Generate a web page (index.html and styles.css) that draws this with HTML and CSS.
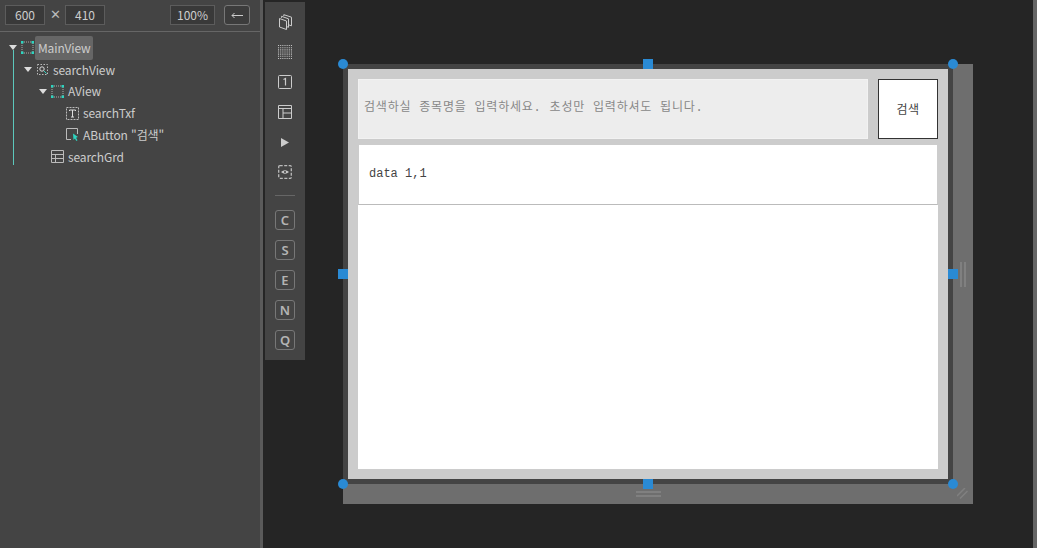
FILE: index.html
```html
<!DOCTYPE html>
<html lang="ko">
<head>
  <meta charset="UTF-8">
  <title>MainView</title>
  <link rel="stylesheet" href="styles.css">
</head>
<body>
  <div class="panel">
    <div class="sizebar">
      <span class="numbox w40">600</span>
      <span class="times">&#x2715;</span>
      <span class="numbox w40">410</span>
      <span class="numbox w45 zoom">100%</span>
      <button class="backbtn"><svg class="back-icon" viewBox="0 0 12 7"><path d="M12 3.500H1M3.500 1L1 3.500 3.500 6" fill="none" stroke="#ccc"/></svg></button>
    </div>

    <div class="tree">
      <div class="tree-line"></div>

      <div class="row lvl0">
        <span class="arrow"></span>
        <svg class="icon" viewBox="0 0 13 13"><rect x="1" y="1" width="11" height="11" fill="none" stroke="#aaa" stroke-dasharray="1 1"/><path d="M0 0h2.500v2.500H0zM10.500 0h2.500v2.500h-2.500zM0 10.500h2.500v2.500H0zM10.500 10.500h2.500v2.500h-2.500z" fill="#2dd4bf"/></svg>
        <span class="label active">MainView</span>
      </div>

      <div class="row lvl1">
        <span class="arrow"></span>
        <svg class="icon" viewBox="0 0 13 13"><rect x="1.500" y="1.500" width="10" height="10" fill="none" stroke="#bbb" stroke-dasharray="1.500 1.500"/><circle cx="6" cy="6" r="2.200" fill="none" stroke="#ddd"/><path d="M8 8l2.500 2.500" stroke="#2dd4bf"/></svg>
        <span class="label">searchView</span>
      </div>

      <div class="row lvl2">
        <span class="arrow"></span>
        <svg class="icon" viewBox="0 0 13 13"><rect x="1" y="1" width="11" height="11" fill="none" stroke="#aaa" stroke-dasharray="1 1"/><path d="M0 0h2.500v2.500H0zM10.500 0h2.500v2.500h-2.500zM0 10.500h2.500v2.500H0zM10.500 10.500h2.500v2.500h-2.500z" fill="#2dd4bf"/></svg>
        <span class="label">AView</span>
      </div>

      <div class="row lvl3">
        <span class="arrow none"></span>
        <svg class="icon" viewBox="0 0 13 13"><rect x="0.500" y="0.500" width="12" height="12" fill="none" stroke="#bbb" stroke-dasharray="2 1"/><path d="M3.500 4V3h6v1M6.500 3v7M5 10h3" fill="none" stroke="#ddd"/></svg>
        <span class="label">searchTxf</span>
      </div>

      <div class="row lvl3">
        <span class="arrow none"></span>
        <svg class="icon" viewBox="0 0 13 13"><path d="M5 11.500H0.500v-11h11V6" fill="none" stroke="#bbb"/><path d="M7 5.500l5 3.500-2 .7 1.500 2.600-1.200.7-1.400-2.600L7.500 12z" fill="#2dd4bf"/></svg>
        <span class="label">AButton "검색"</span>
      </div>

      <div class="row lvl2">
        <span class="arrow none"></span>
        <svg class="icon" viewBox="0 0 13 13"><path d="M.5.5h12v12H.5zM.5 4.500h12M.5 8.500h12M4.500 4.500v8" fill="none" stroke="#bbb"/></svg>
        <span class="label">searchGrd</span>
      </div>
    </div>
  </div>

  <div class="tools">
    <div class="tool"><svg viewBox="0 0 13 16" class="tool-stack"><path d="M.5 4.500l7 2.500v8.500l-7-2.500zM2.500 3.800V2.300l7 2.500v8.500l-2-.7M4.800 2V.7l7.700 2.500v8.600l-3-1" fill="none" stroke="#ccc"/></svg></div>
    <div class="tool"><svg viewBox="0 0 13 13" class="tool-icon"><path d="M0 .5h13M0 2.500h13M0 4.500h13M0 6.500h13M0 8.500h13M0 10.500h13M0 12.500h13" stroke="#c4c4c4" stroke-dasharray="1 1"/></svg></div>
    <div class="tool"><svg viewBox="0 0 14 14" class="tool-icon"><rect x="0.500" y="0.500" width="13" height="13" rx="1" fill="none" stroke="#ccc"/><path d="M5.500 4.500L7.500 3.500V10.500" fill="none" stroke="#ccc" stroke-width="1.200"/></svg></div>
    <div class="tool"><svg viewBox="0 0 14 14" class="tool-icon"><path d="M.5.5h13v13H.5zM.5 3.500h13M5 3.500v10M5 8h8.500" fill="none" stroke="#ccc"/></svg></div>
    <div class="tool"><svg viewBox="0 0 8 9" class="tool-play"><path d="M0 0l8 4.500L0 9z" fill="#ccc"/></svg></div>
    <div class="tool"><svg viewBox="0 0 14 14" class="tool-icon"><rect x="0.700" y="0.700" width="12.600" height="12.600" rx="1" fill="none" stroke="#bbb" stroke-width="1.300" stroke-dasharray="3 1.500"/><path d="M3 7q4-3.500 8 0q-4 3.500-8 0z" fill="#ccc"/><circle cx="7" cy="7" r="1.100" fill="#444"/></svg></div>
    <div class="tool-sep"></div>
    <div class="tool"><span class="letter">C</span></div>
    <div class="tool"><span class="letter">S</span></div>
    <div class="tool"><span class="letter">E</span></div>
    <div class="tool"><span class="letter">N</span></div>
    <div class="tool"><span class="letter">Q</span></div>
  </div>

  <div class="canvas">
    <div class="stage">
      <div class="frame">
        <div class="search-view">
          <div class="search-txf">검색하실 종목명을 입력하세요. 초성만 입력하셔도 됩니다.</div>
          <div class="search-btn">검색</div>
        </div>
        <div class="search-grd">
          <div class="grd-row">data 1,1</div>
        </div>
      </div>

      <span class="handle round tl"></span>
      <span class="handle round tr"></span>
      <span class="handle round bl"></span>
      <span class="handle round br"></span>
      <span class="handle tc"></span>
      <span class="handle bc"></span>
      <span class="handle ml"></span>
      <span class="handle mr"></span>

      <span class="grip-right"></span>
      <span class="grip-bottom"></span>
      <svg class="grip-corner" viewBox="0 0 11 11"><path d="M0 8L8 0M3 10.500L10.500 3" stroke="#808080" stroke-width="1.500"/></svg>
    </div>
  </div>

  <div class="edge"></div>
</body>
</html>
```

FILE: styles.css
```css
html, body {
  height: 100%;
}

body {
  margin: 0;
  display: flex;
  overflow: hidden;
  background-color: #252525;
  font-family: "Noto Sans CJK KR", "Noto Sans", sans-serif;
  font-size: 12px;
  color: #ccc;
}

/* left panel */
.panel {
  width: 260px;
  flex: none;
  background-color: #444;
  border-right: 3px solid #5a5a5a;
}

.sizebar {
  height: 32px;
  box-sizing: border-box;
  padding-top: 5px;
  display: flex;
  align-items: flex-start;
  padding-left: 5px;
  border-bottom: 1px solid #666;
}

.numbox {
  height: 20px;
  box-sizing: border-box;
  border: 1px solid #5c5c5c;
  background-color: #393939;
  text-align: center;
  line-height: 18px;
  color: #ccc;
}

.w40 { width: 40px; }
.w45 { width: 45px; }
.zoom { margin-left: 65px; }

.times {
  width: 20px;
  height: 20px;
  line-height: 18px;
  text-align: center;
  font-size: 13px;
  color: #bbb;
}

.backbtn {
  width: 26px;
  height: 20px;
  margin-left: 9px;
  padding: 0;
  border: 1px solid #777;
  border-radius: 3px;
  background-color: #3c3c3c;
  display: flex;
  align-items: center;
  justify-content: center;
}

.back-icon {
  width: 12px;
  height: 7px;
}

.tree {
  position: relative;
  padding-top: 4.800px;
}

.tree-line {
  position: absolute;
  left: 13px;
  top: 18px;
  width: 1px;
  height: 115px;
  background-color: #5cc8bc;
}

.row {
  height: 21.800px;
  display: flex;
  align-items: center;
}

.lvl0 { padding-left: 9px; }
.lvl1 { padding-left: 24px; }
.lvl2 { padding-left: 39px; }
.lvl3 { padding-left: 54px; }

.arrow {
  width: 0;
  height: 0;
  margin-right: 4px;
  border-left: 4px solid transparent;
  border-right: 4px solid transparent;
  border-top: 5px solid #ddd;
}

.arrow.none {
  border-top-color: transparent;
}

.icon {
  width: 13px;
  height: 13px;
  flex: none;
}

.label {
  margin-left: 1px;
  padding: 0 2px 0 3px;
  line-height: 24px;
  border-radius: 2px;
  white-space: nowrap;
  letter-spacing: -0.120px;
  color: #ccc;
}

.label.active {
  background-color: #666;
}

/* tool column */
.tools {
  width: 40px;
  height: 358px;
  flex: none;
  margin: 2px 0 0 2px;
  padding: 5px 0;
  box-sizing: border-box;
  background-color: #444;
}

.tool {
  height: 30px;
  display: flex;
  align-items: center;
  justify-content: center;
}

.tool-icon {
  width: 14px;
  height: 14px;
}

.tool-stack {
  width: 13px;
  height: 16px;
}

.tool-play {
  width: 8px;
  height: 9px;
}

.tool-sep {
  height: 1px;
  margin: 8px 10px 9px;
  background-color: #666;
}

.letter {
  width: 20px;
  height: 20px;
  box-sizing: border-box;
  border: 1px solid #777;
  border-radius: 3px;
  text-align: center;
  font-family: "Noto Sans", sans-serif;
  font-size: 13px;
  font-weight: 600;
  line-height: 19px;
  color: #b4b4b4;
}

/* design canvas */
.canvas {
  flex: 1;
  padding: 64px 0 0 38px;
}

.stage {
  position: relative;
  width: 630px;
  height: 440px;
  background-color: #6e6e6e;
}

.frame {
  width: 610px;
  height: 420px;
  box-sizing: border-box;
  border: 5px solid #444;
  background-color: #ccc;
  padding: 10px;
  display: flex;
  flex-direction: column;
  gap: 5px;
}

.search-view {
  height: 60px;
  display: flex;
  gap: 10px;
  flex: none;
}

.search-txf {
  flex: 1;
  box-sizing: border-box;
  border: 1px solid #f2f2f2;
  background-color: #ededed;
  padding-left: 5px;
  font-family: "Liberation Mono", "Noto Sans CJK KR", monospace;
  letter-spacing: 0.780px;
  line-height: 56px;
  color: #888;
  white-space: nowrap;
}

.search-btn {
  width: 60px;
  box-sizing: border-box;
  border: 1px solid #333;
  background-color: #fff;
  text-align: center;
  line-height: 58px;
  letter-spacing: 0.500px;
  color: #444;
}

.search-grd {
  flex: 1;
  background-color: #fff;
}

.grd-row {
  height: 61px;
  box-sizing: border-box;
  border: 1px solid #ccc;
  border-bottom-color: #bbb;
  padding-left: 10px;
  font-family: "Liberation Mono", monospace;
  line-height: 58px;
  color: #444;
}

/* selection handles */
.handle {
  position: absolute;
  width: 10px;
  height: 10px;
  background-color: #2a8ad4;
}

.round { border-radius: 50%; }
.tl { left: -5px; top: -5px; }
.tr { left: 605px; top: -5px; }
.bl { left: -5px; top: 415px; }
.br { left: 605px; top: 415px; }
.tc { left: 300px; top: -5px; }
.bc { left: 300px; top: 415px; }
.ml { left: -5px; top: 205px; }
.mr { left: 605px; top: 205px; }

.grip-right {
  position: absolute;
  left: 617px;
  top: 198px;
  width: 2px;
  height: 25px;
  background-color: #808080;
  box-shadow: 4px 0 0 #808080;
}

.grip-bottom {
  position: absolute;
  left: 293px;
  top: 427px;
  width: 25px;
  height: 2px;
  background-color: #808080;
  box-shadow: 0 4px 0 #808080;
}

.grip-corner {
  position: absolute;
  left: 614px;
  top: 424px;
  width: 11px;
  height: 11px;
}

.edge {
  width: 4px;
  flex: none;
  background-color: #666;
}
```
